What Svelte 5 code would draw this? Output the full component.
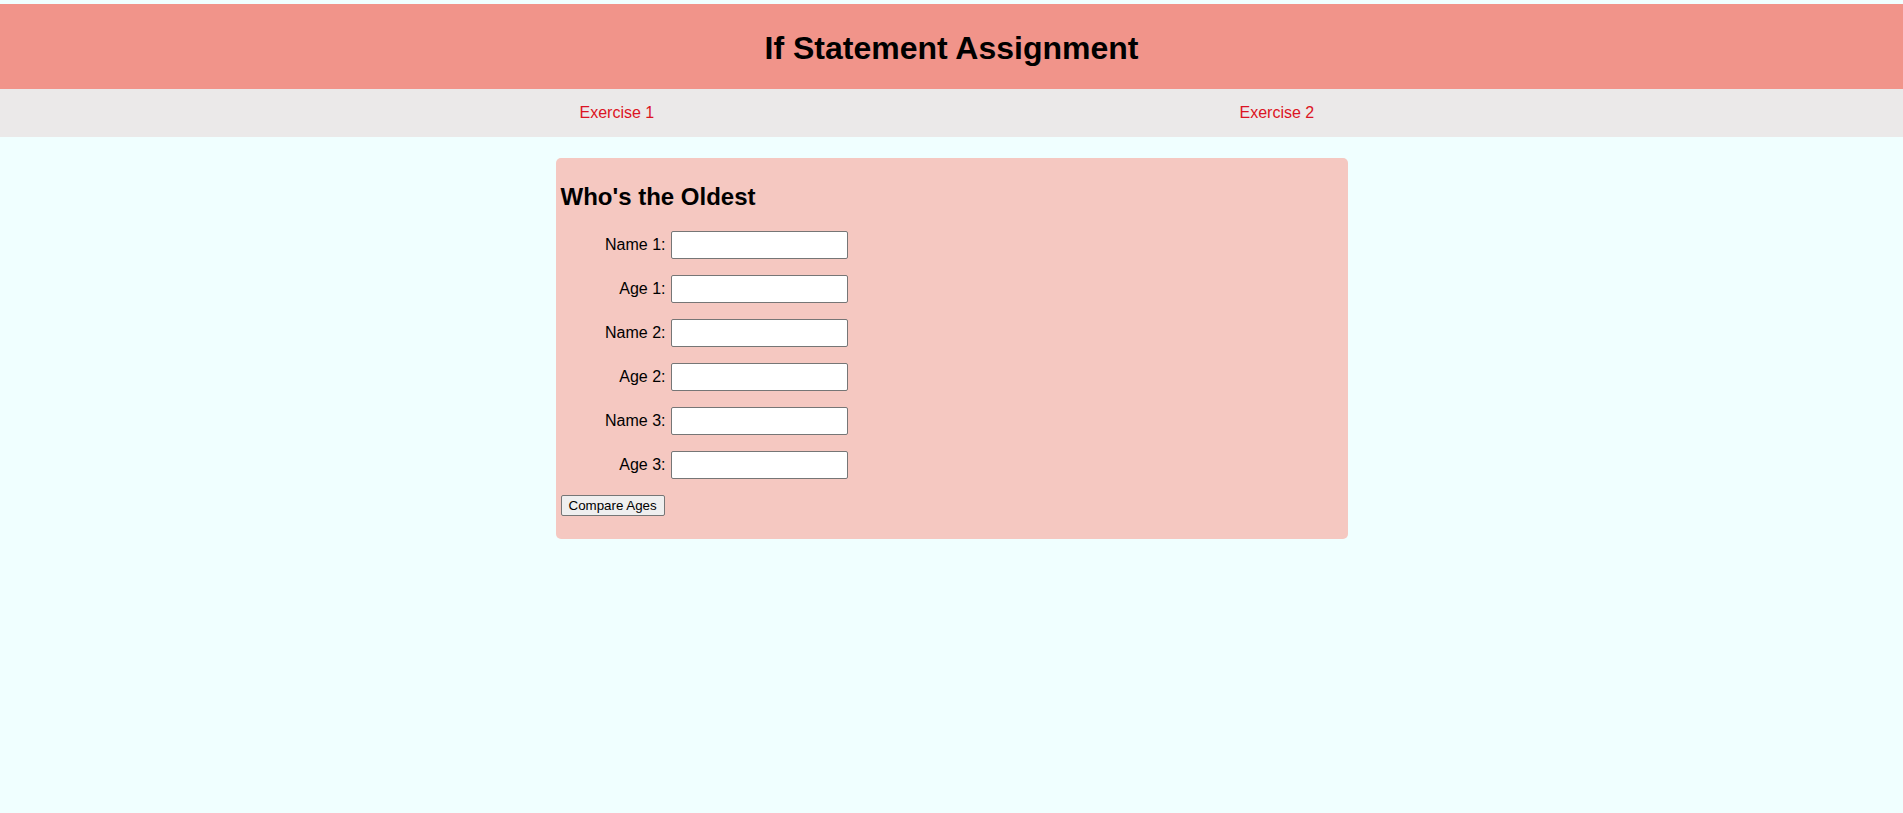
<script>
  const people = [1, 2, 3];
  let names = $state(['', '', '']);
  let ages = $state(['', '', '']);
  let result = $state('');

  function compareAges(event) {
    event.preventDefault();
    const values = ages.map(Number);
    if (ages.some((age) => age === '') || values.some(Number.isNaN)) return;
    const top = Math.max(...values);
    result = names.filter((_, i) => values[i] === top).join(', ');
  }
</script>

<header>
  <h1>If Statement Assignment</h1>
</header>

<nav>
  <ul>
    <li><a href="#exercise-1">Exercise 1</a></li>
    <li><a href="#exercise-2">Exercise 2</a></li>
  </ul>
</nav>

<main>
  <form onsubmit={compareAges}>
    <h2>Who's the Oldest</h2>
    <div class="fields">
      {#each people as n, i}
        <label for="name-{n}">Name {n}:</label>
        <input id="name-{n}" type="text" bind:value={names[i]} />
        <label for="age-{n}">Age {n}:</label>
        <input id="age-{n}" type="text" inputmode="numeric" bind:value={ages[i]} />
      {/each}
    </div>
    <button type="submit">Compare Ages</button>
    {#if result}<p>{result}</p>{/if}
  </form>
</main>

<style>
  :global(body) {
    margin: 0;
    padding-top: 4px;
    background: #f0ffff;
    color: #000;
    font-family: Arial, "Liberation Sans", sans-serif;
    font-size: 16px;
  }

  header {
    padding: 25px 0 22px;
    background: #f1948a;
    text-align: center;
  }

  h1 {
    margin: 0;
    font-size: 32px;
    line-height: 38px;
  }

  nav {
    background: #ebe9e9;
  }

  ul {
    display: grid;
    grid-template-columns: repeat(6, 1fr);
    max-width: 792px;
    margin: 0 auto;
    padding: 0;
    list-style: none;
  }

  li:last-child {
    grid-column: 6;
  }

  a {
    display: block;
    padding: 15px 24px;
    color: #dc1423;
    line-height: 18px;
    text-decoration: none;
    white-space: nowrap;
  }

  form {
    box-sizing: border-box;
    max-width: 792px;
    margin: 21px auto 0;
    padding: 25px 5px 23px;
    border-radius: 5px;
    background: #f5c8c1;
  }

  h2 {
    margin: 0 0 20px;
    font-size: 24px;
    line-height: 28px;
  }

  .fields {
    display: grid;
    grid-template-columns: 105px 177px;
    column-gap: 5px;
    row-gap: 16px;
    margin-bottom: 16px;
  }

  label {
    line-height: 28px;
    text-align: right;
  }

  input {
    box-sizing: border-box;
    width: 100%;
    height: 28px;
    padding: 1px 2px;
    border: 1px solid #767676;
    border-radius: 2px;
    background: #fff;
    font-family: inherit;
  }

  button {
    display: block;
    box-sizing: border-box;
    height: 21px;
    padding: 1px 7px;
    border: 1px solid #767676;
    border-radius: 2px;
    background: #efefef;
    color: #000;
    font-family: inherit;
  }

  p {
    margin: 16px 0 0;
  }
</style>
